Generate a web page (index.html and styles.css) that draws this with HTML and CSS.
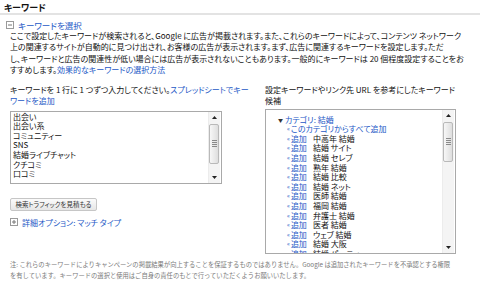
FILE: index.html
```
<!DOCTYPE html>
<html lang="ja">
<head>
<meta charset="utf-8">
<title>キーワード</title>
<link rel="stylesheet" href="styles.css">
</head>
<body>
<div class="page">
  <h2 class="title">キーワード</h2>
  <div class="toggle">
    <svg class="tbox" width="8" height="8" viewBox="0 0 8 8"><rect x="0.5" y="0.5" width="7" height="7" fill="#fff" stroke="#9a9a9a"/><path d="M2 4h4" stroke="#777" stroke-width="1"/></svg>
    <a class="link">キーワードを選択</a>
  </div>
  <p class="intro">ここで設定したキーワードが検索されると、Google に広告が掲載されます。また、これらのキーワードによって、コンテンツ ネットワーク<br>上の関連するサイトが自動的に見つけ出され、お客様の広告が表示されます。まず、広告に関連するキーワードを設定します。ただ<br>し、キーワードと広告の関連性が低い場合には広告が表示されないこともあります。一般的にキーワードは 20 個程度設定することをお<br>すすめします。<a class="link">効果的なキーワードの選択方法</a></p>

  <div class="cols">
    <div class="col col-left">
      <p class="prompt">キーワードを 1 行に 1 つずつ入力してください。<a class="link">スプレッドシートでキー<br>ワードを追加</a></p>
      <div class="listbox box-left">
        <div class="items">
          <div class="kw">出会い</div>
          <div class="kw">出会い系</div>
          <div class="kw">コミュニティー</div>
          <div class="kw">SNS</div>
          <div class="kw">結婚ライブチャット</div>
          <div class="kw">クチコミ</div>
          <div class="kw">口コミ</div>
        </div>
        <div class="sbar">
          <div class="sbtn"><svg width="5" height="3" viewBox="0 0 5 3"><path d="M2.5 0L5 3H0z" fill="#222"/></svg></div>
          <div class="strack"><div class="thumb thumb-left"><span></span><span></span><span></span><span></span></div></div>
          <div class="sbtn"><svg width="5" height="3" viewBox="0 0 5 3"><path d="M0 0h5L2.5 3z" fill="#222"/></svg></div>
        </div>
      </div>
      <button class="btn">検索トラフィックを見積もる</button>
      <div class="toggle adv">
        <svg class="tbox" width="8" height="8" viewBox="0 0 8 8"><rect x="0.5" y="0.5" width="7" height="7" fill="#fff" stroke="#9a9a9a"/><path d="M2 4h4M4 2v4" stroke="#777" stroke-width="1"/></svg>
        <a class="link">詳細オプション: マッチ タイプ</a>
      </div>
    </div>

    <div class="col col-right">
      <p class="prompt">設定キーワードやリンク先 URL を参考にしたキーワード<br>候補</p>
      <div class="listbox box-right">
        <div class="items sugg">
          <div class="kw cat"><span class="tri">▼</span><a class="link">カテゴリ: 結婚</a></div>
          <div class="kw all"><span class="raq">«</span><a class="link">このカテゴリからすべて追加</a></div>
          <div class="kw row"><span class="add"><span class="raq">«</span><a class="link">追加</a></span><span>中高年 結婚</span></div>
          <div class="kw row"><span class="add"><span class="raq">«</span><a class="link">追加</a></span><span>結婚 サイト</span></div>
          <div class="kw row"><span class="add"><span class="raq">«</span><a class="link">追加</a></span><span>結婚 セレブ</span></div>
          <div class="kw row"><span class="add"><span class="raq">«</span><a class="link">追加</a></span><span>熟年 結婚</span></div>
          <div class="kw row"><span class="add"><span class="raq">«</span><a class="link">追加</a></span><span>結婚 比較</span></div>
          <div class="kw row"><span class="add"><span class="raq">«</span><a class="link">追加</a></span><span>結婚 ネット</span></div>
          <div class="kw row"><span class="add"><span class="raq">«</span><a class="link">追加</a></span><span>医師 結婚</span></div>
          <div class="kw row"><span class="add"><span class="raq">«</span><a class="link">追加</a></span><span>福岡 結婚</span></div>
          <div class="kw row"><span class="add"><span class="raq">«</span><a class="link">追加</a></span><span>弁護士 結婚</span></div>
          <div class="kw row"><span class="add"><span class="raq">«</span><a class="link">追加</a></span><span>医者 結婚</span></div>
          <div class="kw row"><span class="add"><span class="raq">«</span><a class="link">追加</a></span><span>ウェブ 結婚</span></div>
          <div class="kw row"><span class="add"><span class="raq">«</span><a class="link">追加</a></span><span>結婚 大阪</span></div>
          <div class="kw row"><span class="add"><span class="raq">«</span><a class="link">追加</a></span><span>結婚 パーティー</span></div>
        </div>
        <div class="sbar">
          <div class="sbtn"><svg width="5" height="3" viewBox="0 0 5 3"><path d="M2.5 0L5 3H0z" fill="#222"/></svg></div>
          <div class="strack"><div class="thumb thumb-right"><span></span><span></span><span></span><span></span></div></div>
          <div class="sbtn"><svg width="5" height="3" viewBox="0 0 5 3"><path d="M0 0h5L2.5 3z" fill="#222"/></svg></div>
        </div>
      </div>
    </div>
  </div>

  <p class="note">注: これらのキーワードによりキャンペーンの掲載結果が向上することを保証するものではありません。Google は追加されたキーワードを不承認とする権限<br>を有しています。キーワードの選択と使用はご自身の責任のもとで行っていただくようお願いいたします。</p>
</div>
</body>
</html>
```

FILE: styles.css
```
* { box-sizing: border-box; }
html, body {
  margin: 0;
  padding: 0;
  background: #fff;
}
body {
  font-family: "Noto Sans CJK JP", "Noto Sans", sans-serif;
  font-feature-settings: "palt" 1;
  color: #111;
  font-size: 8px;
  width: 480px;
  height: 290px;
  overflow: hidden;
}
.page {
  display: flex;
  flex-direction: column;
}
.link {
  color: #2458c6;
  text-decoration: none;
}
.title {
  margin: 0;
  padding: 2px 0 0 4px;
  font-size: 9px;
  line-height: 11px;
  font-weight: bold;
  border-bottom: 2px solid #e3e3e3;
  white-space: nowrap;
}
.toggle {
  display: flex;
  align-items: center;
  gap: 4px;
  margin: 4px 0 0 6px;
  height: 11px;
  font-size: 8.5px;
  white-space: nowrap;
}
.tbox { display: block; flex: none; }
.intro {
  margin: 0;
  padding-left: 10px;
  font-size: 8px;
  line-height: 11.4px;
  white-space: nowrap;
}
.cols {
  display: flex;
  margin-top: 8px;
}
.col { display: flex; flex-direction: column; }
.col-left { width: 265px; padding-left: 10px; }
.col-right { width: 195px; }
.prompt {
  margin: 0;
  line-height: 11px;
  white-space: nowrap;
}
.listbox {
  display: flex;
  border: 1px solid #a9a9a9;
  background: #fff;
  overflow: hidden;
}
.box-left {
  width: 212px;
  height: 73px;
  margin-top: 5px;
}
.box-right {
  width: 191px;
  height: 145px;
  margin-top: 3px;
}
.items {
  flex: 1;
  min-width: 0;
  white-space: nowrap;
  overflow: hidden;
  display: flex;
  flex-direction: column;
}
.kw {
  flex: none;
  height: 9.6px;
  line-height: 9.6px;
  display: flex;
  align-items: center;
}
.box-left .items { padding: 0 0 0 2px; }
.sugg { padding: 5px 0 0 12px; }
.tri { font-size: 5px; color: #333; width: 7px; line-height: 9.6px; }
.all { padding-left: 9px; }
.raq { font-size: 6px; line-height: 9.6px; color: #2458c6; margin-right: 1px; }
.row { padding-left: 9px; }
.add { display: flex; align-items: center; width: 26px; flex: none; }
.sbar {
  flex: none;
  width: 12px;
  margin-right: 1px;
  display: flex;
  flex-direction: column;
  background: #f4f4f4;
  border-left: 1px solid #ececec;
}
.sbtn {
  height: 11px;
  flex: none;
  display: flex;
  align-items: center;
  justify-content: center;
}
.sbtn svg { display: block; }
.strack { flex: 1; display: flex; flex-direction: column; }
.thumb {
  margin: 1px 1px 0 0;
  border: 1px solid #b9b9b9;
  border-radius: 2px;
  background: linear-gradient(to right, #f7f7f7, #dedede);
  display: flex;
  flex-direction: column;
  align-items: center;
  justify-content: center;
  gap: 1px;
}
.thumb span {
  display: block;
  width: 5px;
  height: 1px;
  background: #8a8a8a;
}
.thumb-left { height: 40px; }
.thumb-right { height: 40px; }
.btn {
  align-self: flex-start;
  margin-top: 14px;
  width: 87px;
  height: 13px;
  padding: 0;
  border: 1px solid #c6c6c6;
  border-radius: 2px;
  background: linear-gradient(#fbfbfb, #e6e6e6);
  font-family: inherit;
  font-feature-settings: "palt" 1;
  font-size: 6.5px;
  color: #333;
  white-space: nowrap;
}
.adv { margin: 6px 0 0 0; gap: 4px; font-size: 8px; }
.note {
  margin: 5px 0 0 0;
  padding-left: 10px;
  font-size: 6.3px;
  line-height: 11px;
  color: #7a7a7a;
  font-feature-settings: normal;
  white-space: nowrap;
}
```
